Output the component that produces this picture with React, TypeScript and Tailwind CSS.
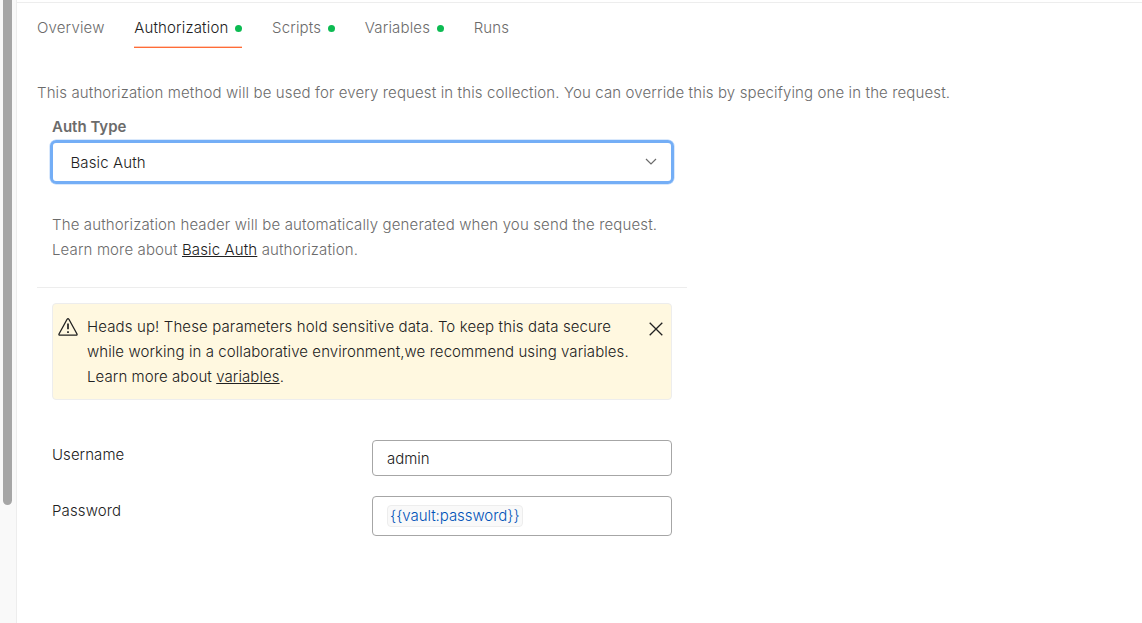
import React from "react";

const fields = "w-[300px] rounded border border-[#a6a6a6] bg-white px-[14px] flex items-center";

function Tab({ label, dot, active }: { label: string; dot?: boolean; active?: boolean }) {
  return (
    <div className={active ? "text-[#212121]" : "text-[#6b6b6b]"}>
      <div className="flex h-[43px] items-center pt-[6px]">
        <span className="tracking-[0.16px]">{label}</span>
        {dot && <span className="ml-[7px] mt-[2px] size-[7px] rounded-full bg-[#0cbb52]" />}
      </div>
      {active && <div className="h-[2px] border-b border-[#ff6c37] bg-[#ffcab6]" />}
    </div>
  );
}

export default function App() {
  return (
    <div className="flex h-[623px] w-[1142px] overflow-hidden bg-white font-['Inter',sans-serif] text-[15px] font-[350] leading-[25px] tracking-[0.125px] text-[#212121]">
      <div className="h-full w-[17px] shrink-0 border-r border-[#ededed] bg-[#f9f9f9] pl-[3px]">
        <div className="h-[505px] w-[9px] rounded-b-full bg-[#a6a6a6]" />
      </div>
      <div className="mt-[2px] flex-1 border-t border-[#ededed] pl-5">
        <div className="flex h-[45px] gap-[29.6px]">
          <Tab label="Overview" />
          <Tab label="Authorization" dot active />
          <Tab label="Scripts" dot />
          <Tab label="Variables" dot />
          <Tab label="Runs" />
        </div>
        <p className="mt-8 text-[#6b6b6b]">This authorization method will be used for every request in this collection. You can override this by specifying one in the request.</p>
        <div className="w-[650px]">
          <div className="ml-[15px] mt-[9px] font-semibold tracking-normal text-[#6b6b6b]">Auth Type</div>
          <div className="ml-[13px] mt-px flex h-[44px] w-[624px] items-center justify-between rounded-[6px] border-[3px] border-[#74aef6] pl-[17.5px] pr-[14px] shadow-[0_0_0_0.5px_#b5d3fa]">
            <span>Basic Auth</span>
            <svg width="12" height="8" viewBox="0 0 12 8" fill="none" stroke="#6b6b6b" strokeWidth="1.2"><path d="M1 1l5 5 5-5" /></svg>
          </div>
          <p className="ml-[15px] mt-7 text-[#6b6b6b]"><span className="tracking-[0.14px]">The authorization header will be automatically generated when you send the request.</span><br />Learn more about <span className="text-[#212121] underline">Basic Auth</span> authorization.</p>
          <div className="mt-[25px] border-t border-[#ededed]" />
          <div className="ml-[15px] mt-[15px] flex h-[97px] w-[620px] rounded border border-[#ededed] bg-[#fff8e0] pt-[10px]">
            <svg className="ml-[5px] mt-[3px] shrink-0" width="20" height="20" viewBox="0 0 20 20" fill="none" stroke="#212121" strokeWidth="1.3" strokeLinejoin="round"><path d="M9.1 2.3Q10 1 10.9 2.3L19 17Q19.4 18.2 18.2 18.2H1.8Q.6 18.2 1 17Z" /><path d="M10 6.5v5.8M10 14.3v1.7" strokeWidth="1.7" /></svg>
            <p className="ml-[9px] w-[550px]">Heads up! These parameters hold sensitive data. To keep this data secure<br /><span className="tracking-[0.075px]">while working in a collaborative environment,we recommend using variables.</span><br /><span className="tracking-[0.08px]">Learn more about <span className="underline">variables</span>.</span></p>
            <svg className="ml-[12px] mt-[8px]" width="14" height="14" viewBox="0 0 14 14" stroke="#212121" strokeWidth="1.3"><path d="M.7.7l12.6 12.6M13.3.7L.7 13.3" /></svg>
          </div>
          <div className="ml-[15px] mt-10 flex">
            <span className="w-[320px] pt-[2px] tracking-[0.05px]">Username</span>
            <div className={`${fields} h-9 tracking-normal`}>admin</div>
          </div>
          <div className="ml-[15px] mt-5 flex">
            <span className="w-[320px] pt-[2px]">Password</span>
            <div className={`${fields} h-10`}><span className="rounded border border-[#ededed] bg-[#f9f9f9] px-[2px] leading-5 tracking-[-0.06px] text-[#0053b8]">{"{{vault:password}}"}</span></div>
          </div>
        </div>
      </div>
    </div>
  );
}
